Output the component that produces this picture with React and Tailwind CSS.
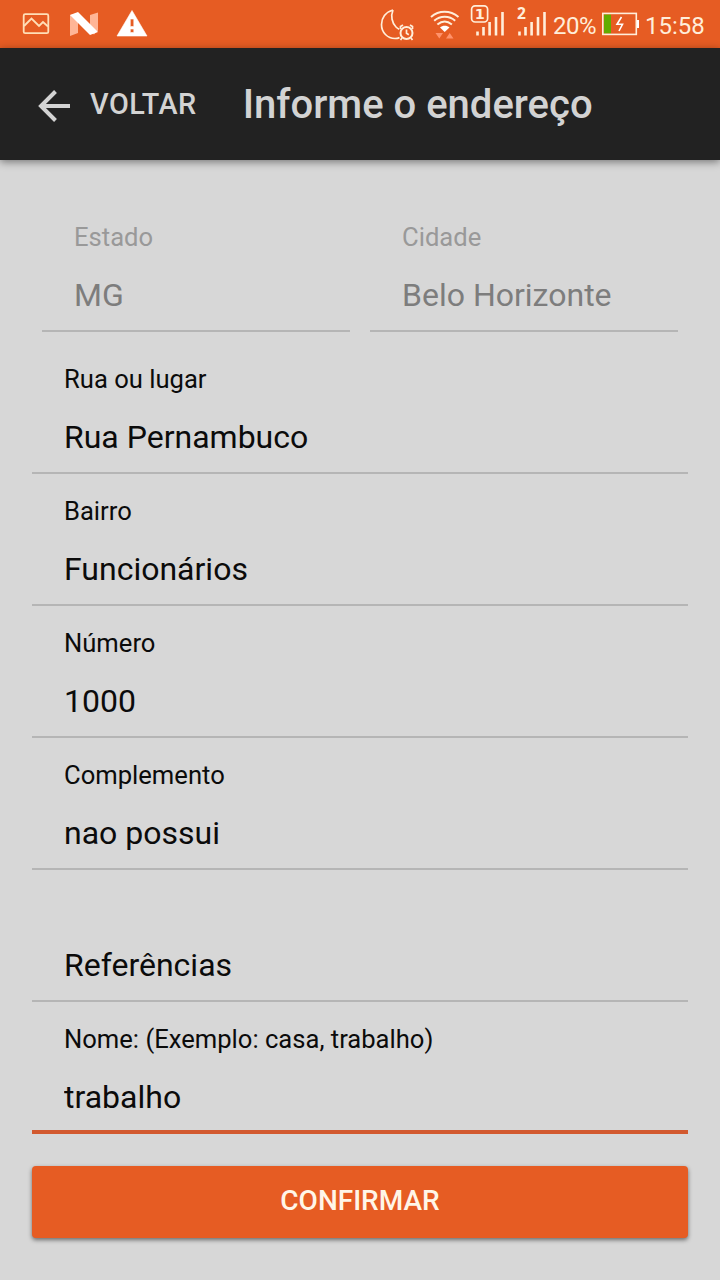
import React, { useState } from "react";

const StatusBar = () => {
  return (
    <div className="h-12 shrink-0 bg-[#e65c23] text-[#ffeeda] flex items-center justify-between">
      <div className="flex">
        <svg className="w-[154px] h-12" viewBox="0 0 154 48" fill="none">
          <rect x="23.7" y="14.2" width="24.6" height="19" rx="1.5" stroke="#ffdfb8" strokeWidth="1.8" />
          <path d="M24 26l7.5-7.5 7.500 7.500 4-4 5 4.500" stroke="#ffdfb8" strokeWidth="1.9" />
          <path d="M70 15l8-2v20l-8 3zM98 12.500v18l-4 4-4-3V15z" fill="#ffb596" />
          <path d="M70 15l8-3 20 20-8 3z" fill="#fff" />
          <path
            fillRule="evenodd"
            d="M132 10.500L147 36H117zM130.300 19v7.500h3.500V19zM130.300 29v3.500h3.500V29z"
            fill="#fff"
            stroke="#fff"
            strokeWidth="0.600"
            strokeLinejoin="round"
          />
        </svg>
      </div>
      <div className="flex items-center pr-4">
        <svg className="w-[173px] h-12" viewBox="378 0 173 48" fill="none" stroke="currentColor">
          {/* night mode with alarm */}
          <path d="M393 10c-7.500 2-11.500 8-11.500 14.500 0 8 6 14 13.500 14 1.500 0 3-.3 4.500-.9M393 10c-2.500 6-1 13 3 17 1 1 2 1.800 3.300 2.300" strokeWidth="1.700" />
          <circle cx="406.500" cy="33" r="6" strokeWidth="2" />
          <path d="M406.500 29.500v3.700l2.300 1.500M400.500 29v-2.500l2.500-1.500M412.500 29v-2.500L410 25M402 38l-1.500 2M411 38l1.500 2" strokeWidth="1.700" />
          {/* wifi */}
          <path d="M431 17c8-7 19-7 27.500 0M434.200 20.800c6-5.300 15-5.300 21 0M437.400 24.500c4.500-3.700 10-3.700 14.500 0" strokeWidth="2" />
          <path d="M440 27.500c2.500-2.300 7-2.300 9.500 0L444.700 32z" fill="#fff" stroke="none" />
          <path d="M435.500 33h7.500l-3.700 5.500zM446 38.500h7.500L449.700 33z" fill="#ff926b" stroke="none" />
          {/* sim 1 */}
          <rect x="471.600" y="5.800" width="16" height="16.200" rx="3.500" strokeWidth="1.700" />
          <path d="M477.500 35.500v-4M483.500 35.500v-8.500M489.600 35.500V22M496 35.500V17M502.500 35.500V12" strokeWidth="2.600" />
          <text x="474.700" y="19" fontSize="14.500" fontWeight="700" fontFamily="DejaVu Sans, sans-serif" fill="currentColor" stroke="none">1</text>
          {/* sim 2 */}
          <path d="M519.500 35.500v-4M525.500 35.500v-8.500M531.600 35.500V22M538 35.500V17M544.500 35.500V12" strokeWidth="2.600" />
          <text x="517" y="19" fontSize="15.500" fontWeight="700" fontFamily="Open Sans, sans-serif" fill="currentColor" stroke="none">2</text>
        </svg>
        <span className="w-[45px] ml-0.5 mt-[3px] text-2xl tracking-[-0.5px]">20%</span>
        <svg className="w-[38px] h-12 ml-1" viewBox="602 0 38 48" fill="none">
          <rect x="604" y="14.500" width="7" height="19" fill="#62ac00" />
          <rect x="602.800" y="13.400" width="33.500" height="21" stroke="currentColor" strokeWidth="1.600" />
          <path d="M637 20h2v8h-2z" fill="#fff" />
          <path d="M621.500 17l-4.500 7.300h5.500l-3.500 6.700" stroke="#fff" strokeWidth="1.600" />
        </svg>
        <span className="ml-[5px] mt-[3px] text-2xl w-[59px]">15:58</span>
      </div>
    </div>
  );
};

const Field = ({ label, value, onChange, disabled, focused }) => {
  return (
    <label
      className={`h-[132px] flex flex-col border-solid pt-[22px] pl-8 ${
        focused ? "border-b-4 border-[#d2592f]" : "border-b-2 border-[#b5b5b5]"
      } ${disabled ? "text-[#7d7d7d]" : "text-[#0b0b0b]"}`}
    >
      <span className={`h-[30px] leading-[30px] text-[25.6px] ${disabled ? "text-[#999999]" : ""}`}>
        {label}
      </span>
      <input
        className="mt-[23px] h-10 w-full bg-transparent text-[32px] leading-10 outline-none"
        value={value}
        onChange={onChange}
        disabled={disabled}
      />
    </label>
  );
};

const App = () => {
  const [form, setForm] = useState({
    rua: "Rua Pernambuco",
    bairro: "Funcionários",
    numero: "1000",
    complemento: "nao possui",
    referencias: "Referências",
    nome: "trabalho",
  });

  const handleChange = (key) => (e) => {
    setForm({ ...form, [key]: e.target.value });
  };

  return (
    <div className="h-[1280px] w-[720px] overflow-hidden bg-[#d7d7d7] font-[Roboto,sans-serif] flex flex-col">
      <StatusBar />

      <header className="h-28 shrink-0 bg-[#222222] text-[#d3d3d3] flex items-center shadow-[0_2px_8px_rgba(0,0,0,0.45)]">
        <button className="flex items-center ml-[38px]">
          <svg className="w-8 h-8 mt-1" viewBox="0 0 32 32" fill="none" stroke="currentColor" strokeWidth="4">
            <path d="M32 16H3M17.500 1.500L3 16l14.500 14.500" />
          </svg>
          <span className="ml-5 mt-0.5 text-[28.8px] font-medium tracking-[0.5px]">VOLTAR</span>
        </button>
        <h1 className="ml-[46px] mt-0.5 text-[40px] font-medium">Informe o endereço</h1>
      </header>

      <main className="px-8 pt-10 flex flex-col">
        <div className="flex gap-5 px-2.5 mb-2.5">
          <div className="flex-1">
            <Field label="Estado" value="MG" disabled />
          </div>
          <div className="flex-1">
            <Field label="Cidade" value="Belo Horizonte" disabled />
          </div>
        </div>

        <Field label="Rua ou lugar" value={form.rua} onChange={handleChange("rua")} />
        <Field label="Bairro" value={form.bairro} onChange={handleChange("bairro")} />
        <Field label="Número" value={form.numero} onChange={handleChange("numero")} />
        <Field label="Complemento" value={form.complemento} onChange={handleChange("complemento")} />
        <Field label="" value={form.referencias} onChange={handleChange("referencias")} />
        <Field
          label="Nome: (Exemplo: casa, trabalho)"
          value={form.nome}
          onChange={handleChange("nome")}
          focused
        />

        <button className="mt-8 h-[72px] rounded bg-[#e65c23] text-[#fff6e8] text-[28px] font-medium pb-0.5 shadow-[0_2px_4px_rgba(0,0,0,0.5)]">
          CONFIRMAR
        </button>
      </main>
    </div>
  );
};

export default App;
